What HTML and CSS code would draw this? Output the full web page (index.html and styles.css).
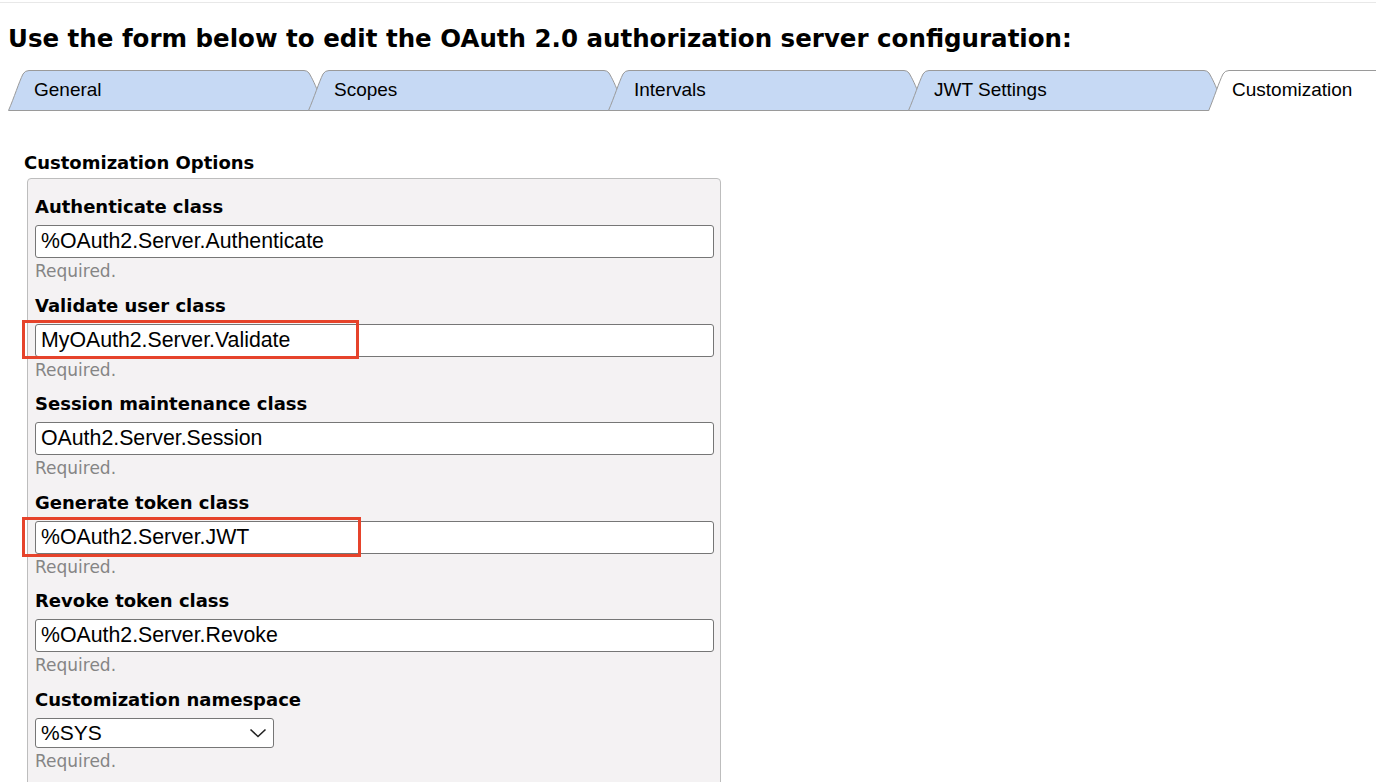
FILE: index.html
```html
<!DOCTYPE html>
<html>
<head>
    <title>OAuth 2.0 Authorization Server Configuration</title>
    <link rel="stylesheet" href="styles.css">
</head>
<body>
    <div class="top-rule"></div>
    <h1 class="page-title">Use the form below to edit the OAuth 2.0 authorization server configuration:</h1>

    <div class="tabs">
        <div class="tab">
            <svg class="tab-shape" width="312" height="41" viewBox="0 0 312 41">
                <path class="tab-fill" d="M0.5,40.5 C6,28 11,12 15,4 Q17,0.5 21,0.5 L296,0.5 Q299,0.5 301,3 C304,8 308,16 311,25 L311,40.5 Z"/>
            </svg>
            <span class="tab-label">General</span>
        </div>
        <div class="tab">
            <svg class="tab-shape" width="312" height="41" viewBox="0 0 312 41">
                <path class="tab-fill" d="M0.5,40.5 C6,28 11,12 15,4 Q17,0.5 21,0.5 L296,0.5 Q299,0.5 301,3 C304,8 308,16 311,25 L311,40.5 Z"/>
            </svg>
            <span class="tab-label">Scopes</span>
        </div>
        <div class="tab">
            <svg class="tab-shape" width="312" height="41" viewBox="0 0 312 41">
                <path class="tab-fill" d="M0.5,40.5 C6,28 11,12 15,4 Q17,0.5 21,0.5 L296,0.5 Q299,0.5 301,3 C304,8 308,16 311,25 L311,40.5 Z"/>
            </svg>
            <span class="tab-label">Intervals</span>
        </div>
        <div class="tab">
            <svg class="tab-shape" width="312" height="41" viewBox="0 0 312 41">
                <path class="tab-fill" d="M0.5,40.5 C6,28 11,12 15,4 Q17,0.5 21,0.5 L296,0.5 Q299,0.5 301,3 C304,8 308,16 311,25 L311,40.5 Z"/>
            </svg>
            <span class="tab-label">JWT Settings</span>
        </div>
        <div class="tab tab-active">
            <svg class="tab-shape" width="312" height="41" viewBox="0 0 312 41">
                <path class="tab-fill-active" d="M0.5,41 C6,28 11,12 15,4 Q17,0.5 21,0.5 L312,0.5 L312,41 Z"/>
                <path class="tab-edge" d="M0.5,41 C6,28 11,12 15,4 Q17,0.5 21,0.5 L312,0.5"/>
            </svg>
            <span class="tab-label">Customization</span>
        </div>
    </div>

    <div class="section">
        <div class="section-title">Customization Options</div>
        <div class="options-box">
            <div class="field">
                <label class="field-label">Authenticate class</label>
                <div class="input-wrap">
                    <input class="text-input" type="text" value="%OAuth2.Server.Authenticate">
                </div>
                <div class="hint">Required.</div>
            </div>
            <div class="field">
                <label class="field-label">Validate user class</label>
                <div class="input-wrap">
                    <input class="text-input" type="text" value="MyOAuth2.Server.Validate">
                    <div class="highlight"></div>
                </div>
                <div class="hint">Required.</div>
            </div>
            <div class="field">
                <label class="field-label">Session maintenance class</label>
                <div class="input-wrap">
                    <input class="text-input" type="text" value="OAuth2.Server.Session">
                </div>
                <div class="hint">Required.</div>
            </div>
            <div class="field">
                <label class="field-label">Generate token class</label>
                <div class="input-wrap">
                    <input class="text-input" type="text" value="%OAuth2.Server.JWT">
                    <div class="highlight highlight-wide"></div>
                </div>
                <div class="hint">Required.</div>
            </div>
            <div class="field">
                <label class="field-label">Revoke token class</label>
                <div class="input-wrap">
                    <input class="text-input" type="text" value="%OAuth2.Server.Revoke">
                </div>
                <div class="hint">Required.</div>
            </div>
            <div class="field">
                <label class="field-label">Customization namespace</label>
                <div class="select-box">
                    <span>%SYS</span>
                    <svg class="chevron" width="18" height="10" viewBox="0 0 18 10">
                        <path d="M1.5,1.5 L9,8.5 L16.5,1.5" fill="none" stroke="#222" stroke-width="1.6"/>
                    </svg>
                </div>
                <div class="hint">Required.</div>
            </div>
        </div>
    </div>
</body>
</html>
```

FILE: styles.css
```css
html, body {
    margin: 0;
    padding: 0;
    background: #fff;
    overflow: hidden;
}
body {
    font-family: "Liberation Sans", Arial, sans-serif;
    color: #000;
    padding-top: 2px;
}
.top-rule {
    border-top: 1px solid #e8e8e8;
}
.page-title {
    font-family: "DejaVu Sans", sans-serif;
    font-weight: bold;
    font-size: 24.5px;
    line-height: 30px;
    margin: 21px 0 0 8px;
    white-space: nowrap;
}
/* Tab strip: tabs overlap, later tab drawn on top */
.tabs {
    display: flex;
    margin-top: 16px;
    padding-left: 8px;
    height: 41px;
    overflow: hidden;
}
.tab {
    position: relative;
    flex: 0 0 312px;
    height: 41px;
    margin-right: -12px;
    display: flex;
    align-items: center;
    padding-left: 26px;
    box-sizing: border-box;
}
.tab-shape {
    position: absolute;
    left: 0;
    top: 0;
}
.tab-fill {
    fill: #c6d9f4;
    stroke: #9a9a9a;
    stroke-width: 1;
}
.tab-fill-active {
    fill: #fff;
}
.tab-edge {
    fill: none;
    stroke: #9a9a9a;
    stroke-width: 1;
}
.tab-label {
    position: relative;
    font-size: 19px;
    line-height: 22px;
    padding-bottom: 1px;
}
.tab-active {
    padding-left: 24px;
}
/* Customization form */
.section {
    padding: 0 0 0 24px;
    margin-top: 40px;
}
.section-title {
    font-family: "DejaVu Sans", sans-serif;
    font-weight: bold;
    font-size: 18px;
    line-height: 24px;
}
.options-box {
    margin: 3px 0 0 3px;
    width: 694px;
    box-sizing: border-box;
    background: #f4f2f3;
    border: 1px solid #bdbdbd;
    border-radius: 4px;
    padding: 16px 6px 40px 7px;
}
.field {
    margin-bottom: 11.6px;
}
.field-label {
    display: block;
    font-family: "DejaVu Sans", sans-serif;
    font-weight: bold;
    font-size: 18px;
    line-height: 24px;
}
.input-wrap {
    position: relative;
    margin-top: 6px;
}
.text-input {
    display: block;
    width: 100%;
    height: 33px;
    box-sizing: border-box;
    border: 1px solid #767676;
    border-radius: 3px;
    background: #fff;
    padding: 0 5px;
    font-family: "Liberation Sans", Arial, sans-serif;
    font-size: 21.3px;
    color: #000;
    outline: none;
}
/* Red annotation boxes drawn over the inputs */
.highlight {
    position: absolute;
    left: -13px;
    top: -4px;
    width: 337px;
    height: 39px;
    box-sizing: border-box;
    border: 3px solid #e6432b;
    pointer-events: none;
}
.highlight-wide {
    width: 339px;
    height: 40px;
}
.hint {
    font-family: "DejaVu Sans", sans-serif;
    font-size: 17px;
    line-height: 22px;
    margin-top: 2px;
    color: #858585;
}
.select-box {
    margin-top: 6px;
    width: 239px;
    height: 30px;
    box-sizing: border-box;
    border: 1px solid #767676;
    border-radius: 3px;
    background: #fff;
    display: flex;
    align-items: center;
    justify-content: space-between;
    padding: 0 6px 0 5px;
    font-size: 21px;
}
.chevron {
    display: block;
}
```
